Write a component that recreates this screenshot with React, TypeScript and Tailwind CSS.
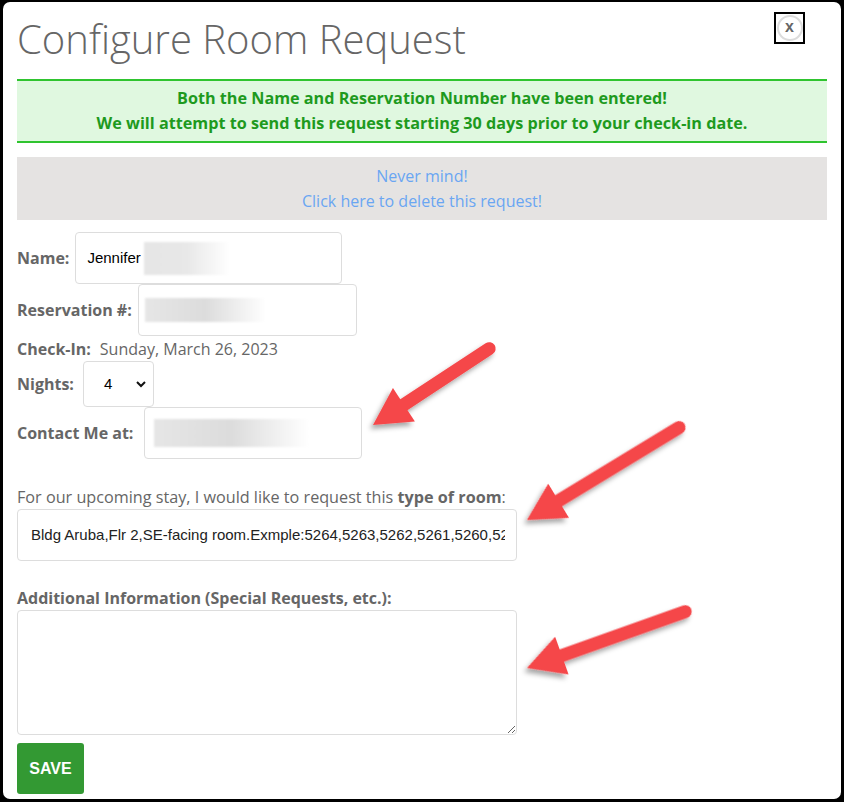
import React from 'react';

const Arrow = ({ x, y, angle, len }: { x: number; y: number; angle: number; len: number }) => (
  <g transform={`translate(${x} ${y}) rotate(${angle})`}>
    <line x1={26} y1={0} x2={len} y2={0} stroke="#f5474a" strokeWidth={13} strokeLinecap="round" />
    <polygon points="0,0 37,-20 37,20" fill="#f5474a" strokeLinejoin="round" />
  </g>
);

const Blur = ({ className }: { className: string }) => (
  <div className={`bg-gradient-to-r from-[#e6e6e6] via-[#dcdcdc] to-white blur-[1px] ${className}`} />
);

const App: React.FC = () => {
  return (
    <div className="relative w-[844px] h-[802px] bg-black pl-[3px] pt-[2px] pr-[3px] pb-[3px] font-['Open_Sans',sans-serif]">
      <div className="h-full bg-white rounded-[7px] px-[14px] overflow-hidden">
        {/* header */}
        <div className="flex items-start justify-between h-[77px]">
          <h1 className="mt-[13px] text-[40px] leading-[48px] font-light text-[#666]">
            Configure Room Request
          </h1>
          <button className="mt-[10px] mr-[22px] w-[31px] h-[32px] border-2 border-black flex items-center justify-center">
            <span className="w-[26px] h-[26px] rounded-full border-2 border-[#dcdcdc] flex items-center justify-center text-[16px] font-bold text-[#666] leading-none font-['Liberation_Sans',sans-serif] pb-[3px]">
              x
            </span>
          </button>
        </div>

        {/* success alert */}
        <div className="border-y-2 border-[#2fc42f] bg-[#e0f8e0] h-[64px] flex flex-col items-center justify-center text-[16.2px] leading-[25px] font-bold text-[#1e9a1e]">
          <p>Both the Name and Reservation Number have been entered!</p>
          <p>We will attempt to send this request starting 30 days prior to your check-in date.</p>
        </div>

        {/* delete box */}
        <div className="mt-[14px] bg-[#e5e3e2] h-[63px] flex flex-col items-center justify-center text-[16px] leading-[25px] text-[#6aa6f2]">
          <p>Never mind!</p>
          <p>Click here to delete this request!</p>
        </div>

        <div className="mt-[12px] text-[16px] text-[#666]">
          <div className="flex items-center h-[52px]">
            <span className="font-bold">Name:</span>
            <div className="ml-[6px] w-[267px] h-[52px] border border-[#ddd] rounded-[4px] flex items-center pl-[11px] font-['Liberation_Sans',sans-serif] text-[15px] text-black">
              Jennifer
              <Blur className="ml-[3px] w-[86px] h-[33px] from-[#e3e3e3] via-[#e8e8e8]" />
            </div>
          </div>
          <div className="flex items-center h-[52px]">
            <span className="font-bold">Reservation #:</span>
            <div className="ml-[6px] w-[219px] h-[52px] border border-[#ddd] rounded-[4px] flex items-center pl-[6px]">
              <Blur className="w-[121px] h-[24px]" />
            </div>
          </div>
          <div className="flex items-center h-[25px]">
            <span className="font-bold">Check-In:</span>
            <span className="ml-[9px]">Sunday, March 26, 2023</span>
          </div>
          <div className="flex items-center h-[46px]">
            <span className="font-bold">Nights:</span>
            <div className="ml-[9px] w-[71px] h-[46px] border border-[#ddd] rounded-[4px] flex items-center justify-between pl-[20px] pr-[5px] font-['Liberation_Sans',sans-serif] text-[15px] text-black">
              4
              <svg width="14" height="10" viewBox="0 0 14 10">
                <path d="M3 3 L7 7 L11 3" fill="none" stroke="#111" strokeWidth="2" />
              </svg>
            </div>
          </div>
          <div className="flex items-center h-[52px]">
            <span className="font-bold">Contact Me at:</span>
            <div className="ml-[11px] w-[218px] h-[52px] border border-[#ddd] rounded-[4px] flex items-center pl-[9px]">
              <Blur className="w-[155px] h-[28px]" />
            </div>
          </div>

          <p className="mt-[26px] leading-[24px] text-[16.2px]">
            For our upcoming stay, I would like to request this <span className="font-bold">type of room</span>:
          </p>
          <div className="w-[500px] h-[52px] border border-[#ddd] rounded-[4px] flex items-center pl-[13px] pr-[11px] overflow-hidden whitespace-nowrap font-['Liberation_Sans',sans-serif] text-[15px] text-[#222]">
            <span className="overflow-hidden">Bldg Aruba,Flr 2,SE-facing room.Exmple:5264,5263,5262,5261,5260,5259</span>
          </div>

          <p className="mt-[25px] leading-[24px] font-bold">Additional Information (Special Requests, etc.):</p>
          <textarea className="block w-[500px] h-[125px] border border-[#ddd] rounded-[4px]" />

          <button className="mt-[8px] w-[67px] h-[51px] bg-[#339933] rounded-[3px] text-white font-bold text-[16px] font-['Liberation_Sans',sans-serif]">
            SAVE
          </button>
        </div>
      </div>

      {/* annotation arrows */}
      <svg className="absolute inset-0 pointer-events-none" width="844" height="802">
        <defs>
          <filter id="sh" x="-20%" y="-20%" width="140%" height="140%">
            <feDropShadow dx="-3" dy="4" stdDeviation="2.5" floodColor="#000" floodOpacity="0.35" />
          </filter>
        </defs>
        <g filter="url(#sh)">
          <Arrow x={373} y={425} angle={-33.3} len={139} />
          <Arrow x={527} y={520} angle={-31.3} len={178} />
          <Arrow x={527} y={668} angle={-19.6} len={168} />
        </g>
      </svg>
    </div>
  );
};

export default App;
